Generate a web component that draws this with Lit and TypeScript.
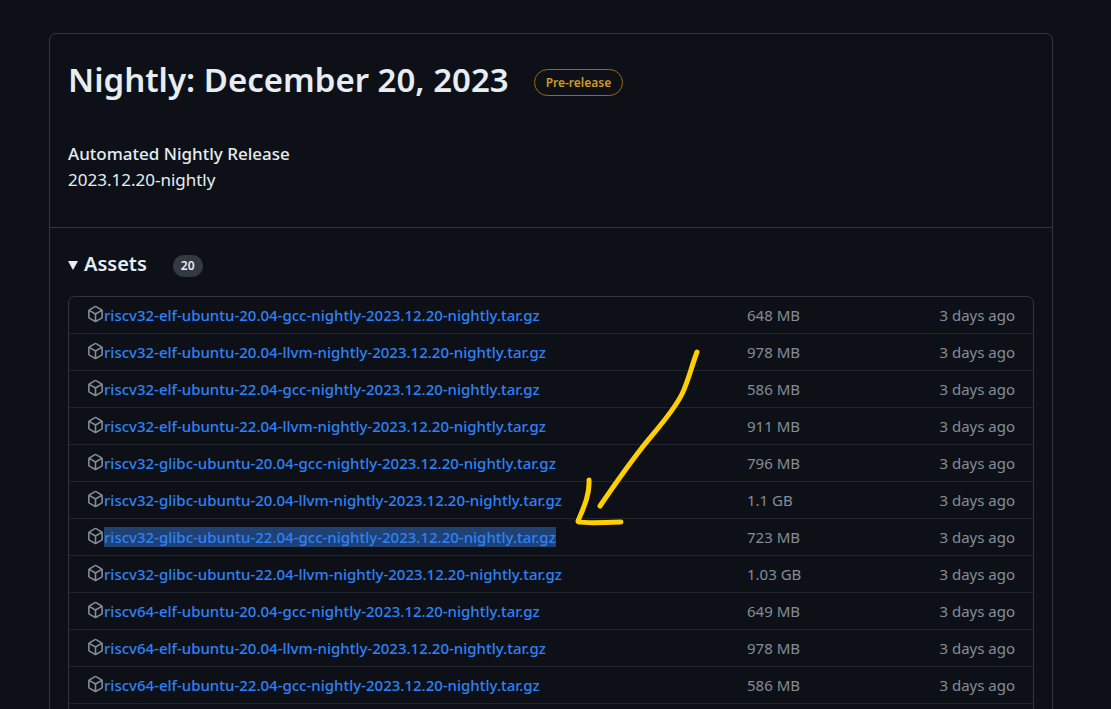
import { LitElement, html, css } from "lit";
import { customElement, property } from "lit/decorators.js";

interface Asset {
  name: string;
  size: string;
  selected?: boolean;
}

const ASSETS: Asset[] = [
  { name: "riscv32-elf-ubuntu-20.04-gcc-nightly-2023.12.20-nightly.tar.gz", size: "648 MB" },
  { name: "riscv32-elf-ubuntu-20.04-llvm-nightly-2023.12.20-nightly.tar.gz", size: "978 MB" },
  { name: "riscv32-elf-ubuntu-22.04-gcc-nightly-2023.12.20-nightly.tar.gz", size: "586 MB" },
  { name: "riscv32-elf-ubuntu-22.04-llvm-nightly-2023.12.20-nightly.tar.gz", size: "911 MB" },
  { name: "riscv32-glibc-ubuntu-20.04-gcc-nightly-2023.12.20-nightly.tar.gz", size: "796 MB" },
  { name: "riscv32-glibc-ubuntu-20.04-llvm-nightly-2023.12.20-nightly.tar.gz", size: "1.1 GB" },
  { name: "riscv32-glibc-ubuntu-22.04-gcc-nightly-2023.12.20-nightly.tar.gz", size: "723 MB", selected: true },
  { name: "riscv32-glibc-ubuntu-22.04-llvm-nightly-2023.12.20-nightly.tar.gz", size: "1.03 GB" },
  { name: "riscv64-elf-ubuntu-20.04-gcc-nightly-2023.12.20-nightly.tar.gz", size: "649 MB" },
  { name: "riscv64-elf-ubuntu-20.04-llvm-nightly-2023.12.20-nightly.tar.gz", size: "978 MB" },
  { name: "riscv64-elf-ubuntu-22.04-gcc-nightly-2023.12.20-nightly.tar.gz", size: "586 MB" },
];

@customElement("asset-row")
export class AssetRow extends LitElement {
  @property({ attribute: false }) asset!: Asset;

  static styles = css`
    :host {
      display: grid;
      grid-template-columns: minmax(0, 660fr) minmax(0, 268fr);
      align-items: center;
      padding: 8px 18px;
      font-size: 15px;
      line-height: 20px;
    }
    .file {
      display: flex;
      align-items: center;
      min-width: 0;
      height: 20px;
    }
    .icon {
      flex: none;
      width: 17px;
      height: 18px;
      margin-bottom: 3px;
      fill: #848d97;
    }
    .link {
      color: #2f81f7;
      font-weight: 550;
      text-decoration: none;
      white-space: nowrap;
    }
    .link:hover {
      text-decoration: underline;
    }
    .selected {
      background: #1f4173;
    }
    .meta {
      display: flex;
      justify-content: space-between;
      color: #848d97;
      white-space: nowrap;
    }
  `;

  render() {
    return html`
      <div class="file">
        <svg class="icon" viewBox="0 0 16 16" aria-hidden="true">
          <path
            d="m8.878.392 5.25 3.045c.54.314.872.89.872 1.514v6.098a1.75 1.75 0 0 1-.872 1.514l-5.25 3.045a1.75 1.75 0 0 1-1.756 0l-5.25-3.045A1.75 1.75 0 0 1 1 11.049V4.951c0-.624.332-1.201.872-1.514L7.122.392a1.75 1.75 0 0 1 1.756 0ZM7.875 1.69l-4.63 2.685L8 7.133l4.755-2.758-4.63-2.685a.248.248 0 0 0-.25 0ZM2.5 5.677v5.372c0 .09.047.171.125.216l4.625 2.683V8.432Zm6.25 8.271 4.625-2.683a.25.25 0 0 0 .125-.216V5.677L8.75 8.432Z"
          ></path>
        </svg>
        <a class="link ${this.asset.selected ? "selected" : ""}" href="#">${this.asset.name}</a>
      </div>
      <div class="meta">
        <span>${this.asset.size}</span>
        <span>3 days ago</span>
      </div>
    `;
  }
}

@customElement("app-root")
export class AppRoot extends LitElement {
  static styles = css`
    :host {
      display: block;
      position: relative;
      box-sizing: border-box;
      height: 100vh;
      overflow: hidden;
      padding: 33px 58px 0 49px;
      background: #0d1117;
      color: #e6edf3;
      font-family: "Noto Sans", "Open Sans", sans-serif;
    }
    .card {
      border: 1px solid #30363d;
      border-radius: 7px;
    }
    .header {
      padding: 22px 18px 34px;
      border-bottom: 1px solid #30363d;
    }
    .title-line {
      display: flex;
      align-items: center;
      gap: 25px;
      margin-bottom: 37px;
    }
    .title {
      margin: 0;
      font-size: 33px;
      line-height: 48px;
      font-weight: 600;
      white-space: nowrap;
    }
    .label {
      margin-top: 4px;
      padding: 0 11px;
      border: 1px solid #9e6a03;
      border-radius: 14px;
      color: #d29922;
      font-size: 12px;
      line-height: 25px;
      font-weight: 600;
      white-space: nowrap;
    }
    .notes {
      margin: 0;
      font-size: 17px;
      line-height: 26px;
    }
    .notes-title {
      font-weight: 550;
    }
    .assets {
      padding: 18px;
    }
    .summary {
      display: flex;
      align-items: center;
      margin-bottom: 15px;
      cursor: pointer;
      list-style: none;
    }
    .marker {
      width: 10px;
      height: 9px;
      margin: 3px 6px 0 0;
      fill: #e6edf3;
    }
    .heading {
      font-size: 20px;
      line-height: 35px;
      font-weight: 600;
    }
    .count {
      margin: 4px 0 0 26px;
      padding: 0 8px;
      border-radius: 11px;
      background: #343941;
      font-size: 12px;
      line-height: 22px;
      font-weight: 600;
    }
    .list {
      margin: 0;
      padding: 0 0 36px;
      border: 1px solid #30363d;
      border-radius: 7px;
      list-style: none;
    }
    .item {
      border-bottom: 1px solid #21262d;
    }
    .arrow {
      position: absolute;
      left: 570px;
      top: 340px;
      width: 140px;
      height: 190px;
      fill: none;
      stroke: #ffcf00;
      stroke-width: 5;
      stroke-linecap: round;
      stroke-linejoin: round;
      pointer-events: none;
    }
  `;

  render() {
    return html`
      <main class="card">
        <header class="header">
          <div class="title-line">
            <h1 class="title">Nightly: December 20, 2023</h1>
            <span class="label">Pre-release</span>
          </div>
          <p class="notes"><strong class="notes-title">Automated Nightly Release</strong><br />2023.12.20-nightly</p>
        </header>
        <details class="assets" open>
          <summary class="summary">
            <svg class="marker" viewBox="0 0 10 9" aria-hidden="true"><path d="M0 0H10L5 9Z"></path></svg>
            <span class="heading">Assets</span>
            <span class="count">20</span>
          </summary>
          <ul class="list">
            ${ASSETS.map((asset) => html`<li class="item"><asset-row .asset=${asset}></asset-row></li>`)}
          </ul>
        </details>
      </main>
      <svg class="arrow" viewBox="0 0 140 190" aria-hidden="true">
        <path d="M127 12C121 28 118 42 112 54C102 74 84 92 71 109C57 127 43 147 30 166"></path>
        <path d="M19 140C20 155 13 169 8 181C7 183 24 183 51 182"></path>
      </svg>
    `;
  }
}
